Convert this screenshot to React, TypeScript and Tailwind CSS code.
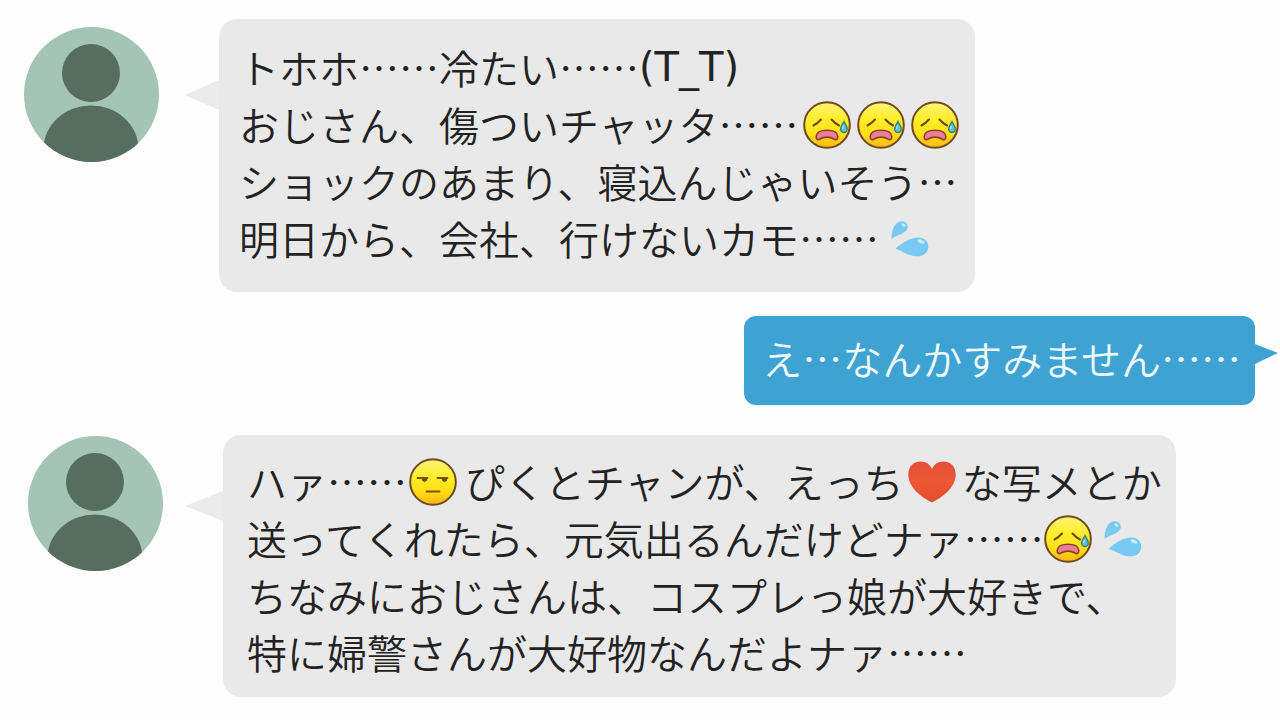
import type { ReactNode } from 'react'
import { clsx } from 'clsx'

function Avatar({ className }: { className?: string }) {
  return (
    <svg viewBox="0 0 135 135" className={clsx('size-[135px] shrink-0', className)} role="img" aria-label="おじさん">
      <defs>
        <clipPath id="avatar-clip">
          <circle cx="67.5" cy="67.5" r="67.5" />
        </clipPath>
      </defs>
      <g clipPath="url(#avatar-clip)">
        <rect width="135" height="135" fill="#a4c5b5" />
        <circle cx="67" cy="46" r="29" fill="#576d60" />
        <ellipse cx="67" cy="122" rx="47.5" ry="43.5" fill="#576d60" />
      </g>
    </svg>
  )
}

function Face({ label, className, children }: { label: string; className?: string; children: ReactNode }) {
  return (
    <svg viewBox="0 0 48 48" className={clsx('size-12 shrink-0', className)} role="img" aria-label={label}>
      <defs>
        <linearGradient id="face-fill" x1="0" y1="0" x2="0" y2="1">
          <stop offset="0" stopColor="#fff37a" />
          <stop offset="0.35" stopColor="#ffee2e" />
          <stop offset="0.7" stopColor="#ffe012" />
          <stop offset="1" stopColor="#fdb515" />
        </linearGradient>
      </defs>
      <circle cx="24" cy="24" r="22.8" fill="url(#face-fill)" stroke="#6f4a1e" strokeWidth="2" />
      {children}
    </svg>
  )
}

function SadFace({ className }: { className?: string }) {
  return (
    <Face label="悲しい" className={className}>
      <path d="M10.500 24.500Q14.500 22.500 18 18.500" fill="none" stroke="#6b4a10" strokeWidth="2" strokeLinecap="round" />
      <path d="M28.500 18.500Q32 22.500 36 24.500" fill="none" stroke="#6b4a10" strokeWidth="2" strokeLinecap="round" />
      <path
        d="M13.200 35.500C13.500 31.500 18 29.300 24 29.300S34.500 31.500 34.800 35.500C35 39 32.500 39.300 30.500 37.800C27 35.600 21 35.600 17.500 37.800C15.500 39.300 13 39 13.200 35.500Z"
        fill="#ee7b9c"
        stroke="#85431f"
        strokeWidth="1.600"
      />
      <path d="M41 20.500C42.500 23.500 44.200 25.500 44.200 28A3.300 3.500 0 0 1 37.600 28C37.600 25.500 39.500 23.500 41 20.500Z" fill="#5cc5dc" stroke="#3c7f78" strokeWidth="1.400" />
      <path d="M39.600 27.500Q39.700 26 40.500 25" fill="none" stroke="#c9f3fa" strokeWidth="1" strokeLinecap="round" />
    </Face>
  )
}

function UnamusedFace({ className }: { className?: string }) {
  return (
    <Face label="不満" className={className}>
      <path d="M8.500 20H18.500M28.500 20H38.500M17.500 33.500H30.500" fill="none" stroke="#7a5210" strokeWidth="1.800" strokeLinecap="round" />
      <path d="M13 20.500H18A2.500 3 0 0 1 13 20.500ZM33 20.500H38A2.500 3 0 0 1 33 20.500Z" fill="#6b4a10" stroke="#6b4a10" strokeWidth="0.8" />
    </Face>
  )
}

function Sweat({ className }: { className?: string }) {
  return (
    <svg viewBox="0 0 38 36" className={clsx('h-9 w-[38px] shrink-0', className)} role="img" aria-label="汗">
      <path d="M0.500 18C0.500 11 2.500 1.500 10 0.300C14.500 -0.300 17.800 3.500 16.500 7.500C14.500 13 6 13.500 0.500 18Z" fill="#78caf2" />
      <path d="M4.500 27.700C11 22 18 17.200 26.500 16.500C33 16 37.500 20 37.300 26C37 32.500 31.500 35.800 25 35.300C17 34.500 11.500 30 4.500 27.700Z" fill="#78caf2" />
      <ellipse cx="12.500" cy="4" rx="2.200" ry="1.500" transform="rotate(35 12.500 4)" fill="#c5ecfb" />
      <ellipse cx="30" cy="20.500" rx="3.600" ry="1.700" transform="rotate(22 30 20.500)" fill="#c5ecfb" />
    </svg>
  )
}

function Heart({ className }: { className?: string }) {
  return (
    <svg viewBox="0 0 48 42" className={clsx('h-[42px] w-12 shrink-0', className)} role="img" aria-label="ハート">
      <defs>
        <linearGradient id="heart-fill" x1="0" y1="0" x2="0" y2="1">
          <stop offset="0" stopColor="#e25038" />
          <stop offset="0.5" stopColor="#ee5733" />
          <stop offset="1" stopColor="#e04c2c" />
        </linearGradient>
      </defs>
      <path
        d="M24 41.500C18 38.500 0.300 28.500 0.300 13.500C0.300 5.500 5.500 0.500 12.500 0.500C18 0.500 22.300 3.500 24 8C25.700 3.500 30 0.500 35.500 0.500C42.500 0.500 47.700 5.500 47.700 13.500C47.700 28.500 30 38.500 24 41.500Z"
        fill="url(#heart-fill)"
      />
    </svg>
  )
}

function Line({ children }: { children: ReactNode }) {
  return <p className="flex h-[57px] items-center whitespace-nowrap text-[40px] leading-[57px]">{children}</p>
}

function Incoming({ className, avatarClass, bubbleClass, tailClass, children }: {
  className?: string
  avatarClass?: string
  bubbleClass?: string
  tailClass?: string
  children: ReactNode
}) {
  return (
    <li className={clsx('flex items-start gap-[60px]', className)}>
      <Avatar className={avatarClass} />
      <div className={clsx('relative rounded-[18px] bg-[#e9e9e9] text-[#222]', bubbleClass)}>
        <svg viewBox="0 0 36 30" preserveAspectRatio="none" className={clsx('absolute right-full h-[30px]', tailClass)} aria-hidden="true">
          <path d="M0 15L36 0V30Z" fill="#ebebeb" />
        </svg>
        {children}
      </div>
    </li>
  )
}

function Outgoing({ children }: { children: ReactNode }) {
  return (
    <li className="mt-6 flex justify-end pr-[25px]">
      <div className="relative rounded-xl bg-[#3ea3d3] pt-3.5 pb-[18px] pl-[18px] pr-3.5 text-[#effaff]">
        {children}
        <svg viewBox="0 0 23 20" className="absolute left-full top-7 h-5 w-[23px]" aria-hidden="true">
          <path d="M0 0L23 9L0 20Z" fill="#3ea3d3" />
        </svg>
      </div>
    </li>
  )
}

export default function App() {
  return (
    <main lang="ja" className="min-h-screen bg-[#fefefe] pt-[19px] font-['Noto_Sans_CJK_JP',sans-serif] font-[350]">
      <ul>
        <Incoming className="pl-6" avatarClass="mt-2" bubbleClass="pt-5 pb-[25px] pl-5 pr-4" tailClass="top-[61px] w-[34px]">
          <Line>
            トホホ……冷たい……
            <span className="font-['DejaVu_Sans',sans-serif] font-normal">(T_T)</span>
          </Line>
          <Line>
            おじさん、傷ついチャッタ……
            <SadFace className="ml-1" />
            <SadFace className="ml-1.5" />
            <SadFace className="ml-1.5" />
          </Line>
          <Line>ショックのあまり、寝込んじゃいそう…</Line>
          <Line>
            明日から、会社、行けないカモ……
            <Sweat className="ml-3" />
          </Line>
        </Incoming>

        <Outgoing>
          <Line>え…なんかすみません……</Line>
        </Outgoing>

        <Incoming className="mt-[30px] pl-7" avatarClass="mt-px" bubbleClass="pt-[18px] pb-4 pl-6 pr-3.5" tailClass="top-14 w-[38px]">
          <Line>
            ハァ……
            <UnamusedFace className="ml-0.5 mr-2" />
            ぴくとチャンが、えっち
            <Heart className="ml-1 mr-1.5" />
            な写メとか
          </Line>
          <Line>
            送ってくれたら、元気出るんだけどナァ……
            <SadFace />
            <Sweat className="ml-3" />
          </Line>
          <Line>ちなみにおじさんは、コスプレっ娘が大好きで、</Line>
          <Line>特に婦警さんが大好物なんだよナァ……</Line>
        </Incoming>
      </ul>
    </main>
  )
}
